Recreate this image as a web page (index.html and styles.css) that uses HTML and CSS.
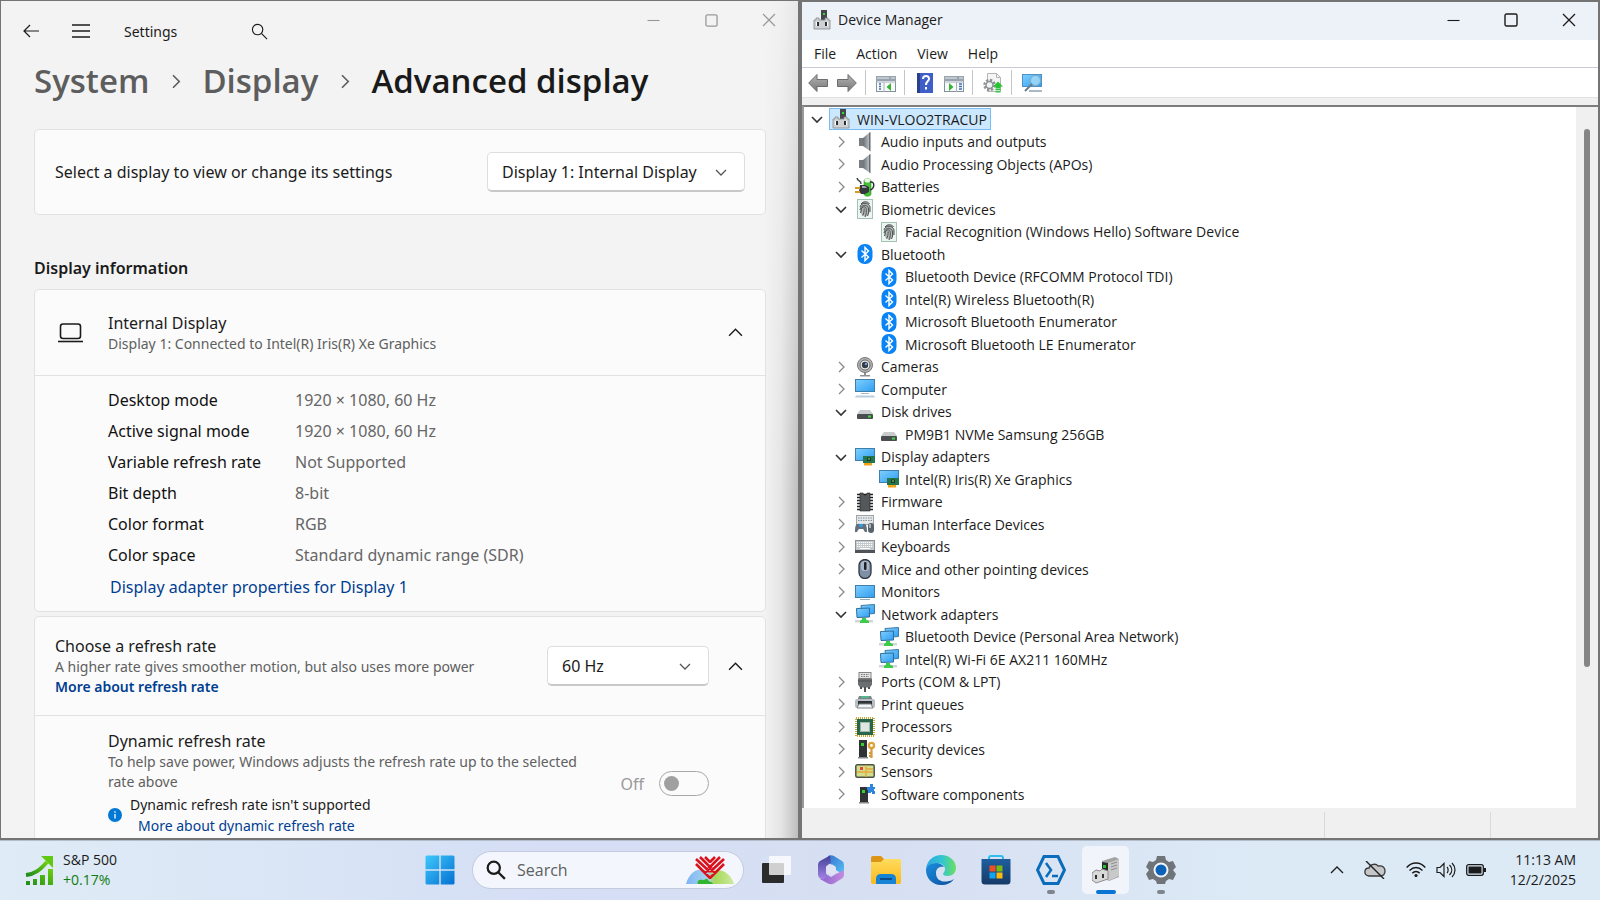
FILE: index.html
```html
<!DOCTYPE html>
<html lang="en">
<head>
    <meta charset="UTF-8">
    <meta name="viewport" content="width=device-width, initial-scale=1.0">
    <title>Advanced display</title>
    <link rel="stylesheet" href="styles.css">
</head>
<body>
    <!-- Icon sprite -->
    <svg class="sprite" aria-hidden="true">
        <defs>
            <linearGradient id="screen" x1="0" y1="0" x2="1" y2="1">
                <stop offset="0" stop-color="#7fd0ff"/><stop offset="1" stop-color="#2f9df0"/>
            </linearGradient>
            <linearGradient id="metal" x1="0" y1="0" x2="1" y2="0">
                <stop offset="0" stop-color="#6b7075"/><stop offset="1" stop-color="#c3c8cc"/>
            </linearGradient>
            <linearGradient id="arrow" x1="0" y1="0" x2="0" y2="1">
                <stop offset="0" stop-color="#b5b5b5"/><stop offset="1" stop-color="#777"/>
            </linearGradient>
            <linearGradient id="win" x1="0" y1="0" x2="1" y2="1">
                <stop offset="0" stop-color="#3fc8fb"/><stop offset="1" stop-color="#0470d2"/>
            </linearGradient>
            <linearGradient id="folder" x1="0" y1="0" x2="0" y2="1">
                <stop offset="0" stop-color="#ffdc5e"/><stop offset="1" stop-color="#fbb91c"/>
            </linearGradient>
            <linearGradient id="copA" x1="0" y1="0" x2="1" y2="1">
                <stop offset="0" stop-color="#3b6fd0"/><stop offset="1" stop-color="#54c6f5"/>
            </linearGradient>
            <linearGradient id="copB" x1="0" y1="0" x2="1" y2="0">
                <stop offset="0" stop-color="#8a62cc"/><stop offset="1" stop-color="#c48de0"/>
            </linearGradient>
            <linearGradient id="copC" x1="0" y1="0" x2="0" y2="1">
                <stop offset="0" stop-color="#3f4296"/><stop offset="1" stop-color="#a684e6"/>
            </linearGradient>
            <linearGradient id="edgeA" x1="0" y1="0" x2="1" y2="0">
                <stop offset="0" stop-color="#2ba6e4"/><stop offset="0.55" stop-color="#34c6cf"/><stop offset="1" stop-color="#6be05c"/>
            </linearGradient>
            <linearGradient id="edgeB" x1="0" y1="0" x2="1" y2="1">
                <stop offset="0" stop-color="#1a8fdd"/><stop offset="1" stop-color="#0d4f9e"/>
            </linearGradient>
            <linearGradient id="store" x1="0" y1="0" x2="0" y2="1">
                <stop offset="0" stop-color="#1e5f9f"/><stop offset="1" stop-color="#163a66"/>
            </linearGradient>
            <linearGradient id="chart" x1="0" y1="1" x2="1" y2="0">
                <stop offset="0" stop-color="#1f8a1c"/><stop offset="1" stop-color="#6fd00f"/>
            </linearGradient>
            <linearGradient id="hill" x1="0" y1="0" x2="1" y2="0">
                <stop offset="0" stop-color="#7db4f5"/><stop offset="0.45" stop-color="#a9d3ee"/><stop offset="0.6" stop-color="#a6d95a"/><stop offset="1" stop-color="#cdeaa0"/>
            </linearGradient>
        </defs>
        <symbol id="i-device" viewBox="0 0 20 20">
            <rect x="9" y="0" width="6" height="10" fill="#44484a"/><rect x="11" y="3" width="2" height="2" fill="#38d430"/>
            <path d="M2 10h2V8h3v2h6V8h3v2h2v9H2z" fill="#cfd2d4" stroke="#85898c" stroke-width=".8"/>
            <path d="M4 12h3v4H4zM13 12h3v4h-3z" fill="#fff"/><path d="M5 12h2v4H5zM13 12h2v4h-2z" fill="#2c2e30"/>
        </symbol>
        <symbol id="i-speaker" viewBox="0 0 20 20">
            <path d="M4 6h4v8H4z" fill="#777c80"/><path d="M8 6l7-6v19l-7-5z" fill="url(#metal)"/><path d="M14 1l1.500-1v19.500L14 18z" fill="#666b70"/>
        </symbol>
        <symbol id="i-battery" viewBox="0 0 20 20">
            <path d="M9 4c0-3 7-3 7 0v13c0 3-7 3-7 0z" fill="#43bf35" stroke="#328a2a" stroke-width=".6"/>
            <ellipse cx="12.500" cy="3.500" rx="3" ry="2" fill="#e9f7e6"/>
            <path d="M15 5c5-1 5 6 0 8" fill="none" stroke="#2d3034" stroke-width="1.500"/>
            <path d="M5 8h5l4 2v5l-4 2H6l-2-3z" fill="#34383c"/><path d="M7 9h3l2 2H7z" fill="#9da2a6"/>
            <path d="M0 11h5M0 15h5" stroke="#d99a25" stroke-width="1.800"/><path d="M2 1c1 4 4 2 4 6" fill="none" stroke="#44484c" stroke-width="1.500"/>
        </symbol>
        <symbol id="i-finger" viewBox="0 0 20 20">
            <rect x="2.500" y=".5" width="15" height="19" fill="#edf5f1" stroke="#a3c2b4"/>
            <ellipse cx="10" cy="10" rx="5" ry="7.500" fill="#b4b9b7"/>
            <g fill="none" stroke="#4b4f51" stroke-width="1"><path d="M6 5c2-3 7-3 8.500 0M5 8c1-5 9-5 10 0v5M5 11c1-6 8-6 8.500-1 .3 3 0 5-1 7M5.500 14c1.500-3 0-5 2.500-6 3-1 3.500 2 3.300 4 0 2-.3 4-1.300 6M7.500 16.500c1.500-2 1.500-4 1.700-7"/></g>
        </symbol>
        <symbol id="i-bluetooth" viewBox="0 0 20 20">
            <rect x="2.500" y="0" width="15" height="20" rx="7" fill="#0a84f5"/>
            <path d="M6.500 6.500l7 6.500-3.500 3.500v-13l3.500 3.500-7 6.500" fill="none" stroke="#fff" stroke-width="1.400"/>
        </symbol>
        <symbol id="i-camera" viewBox="0 0 20 20">
            <path d="M9 14h2v4h4v1.500H5V18h4z" fill="#8d9195"/><circle cx="10" cy="8" r="7.500" fill="#b3b3b3" stroke="#777"/>
            <circle cx="10" cy="8" r="5" fill="#f0f0f0" stroke="#666"/><circle cx="10" cy="8" r="3.200" fill="#333c49"/><circle cx="11" cy="7" r="1.200" fill="#7ba5d1"/>
        </symbol>
        <symbol id="i-computer" viewBox="0 0 20 20">
            <rect x=".5" y=".5" width="19" height="12" fill="url(#screen)" stroke="#3f7fa9"/>
            <path d="M6 14.500h8" stroke="#a9bac6"/><path d="M1 16.500h18l1 2H0z" fill="#b9cede"/>
        </symbol>
        <symbol id="i-disk" viewBox="0 0 20 20">
            <path d="M5 8h10l3 4H2z" fill="#c9cbcc"/><rect x="2" y="12" width="16" height="5" rx="1" fill="#4b4e50"/><rect x="13" y="13.500" width="3" height="2" fill="#3ddc3a"/>
        </symbol>
        <symbol id="i-display" viewBox="0 0 20 20">
            <rect x=".5" y="1.500" width="19" height="12" fill="url(#screen)" stroke="#3f7fa9"/>
            <path d="M9 16h8v2.500H9z" fill="#f3a31b"/><rect x="8" y="9" width="12" height="7" fill="#23764a"/><rect x="12" y="10.500" width="4" height="3.500" fill="#183e2a"/><path d="M13 11.500h2v1h-2z" fill="#9cd28a"/>
        </symbol>
        <symbol id="i-firmware" viewBox="0 0 20 20">
            <path d="M2 2.500h16M2 5.500h16M2 8.500h16M2 11.500h16M2 14.500h16M2 17.500h16" stroke="#222" stroke-width="1.600"/>
            <path d="M5 1h3l1 2h2l1-2h3v18H5z" fill="#55585a" stroke="#222" stroke-width=".6"/>
        </symbol>
        <symbol id="i-hid" viewBox="0 0 20 20">
            <rect x="1.500" y="1.500" width="17" height="9" fill="#e3e7e9" stroke="#9da5aa"/><path d="M3 4h14M3 6.500h14" stroke="#8b949a" stroke-dasharray="1.500 1"/>
            <path d="M0 18c0-6 1-9 4-8h4c3-1 4 2 4 8-3 1-3-3-4-3H4c-1 0-1 4-4 3z" fill="#626f7c"/><circle cx="6" cy="11.500" r="1.800" fill="#2ba2ef"/><rect x="13" y="9" width="6" height="10" rx="3" fill="#59636d"/><path d="M15 10v4" stroke="#fff"/>
        </symbol>
        <symbol id="i-keyboard" viewBox="0 0 20 20">
            <rect x=".5" y="3.500" width="19" height="11" fill="#c3c8cc" stroke="#8a9095"/>
            <path d="M2 5.500h16M2 7.500h16M2 9.500h16" stroke="#fff" stroke-dasharray="1.200 .8"/><path d="M5 11.500h10" stroke="#fff"/><path d="M0 13h20v3H0z" fill="#4d5358"/>
        </symbol>
        <symbol id="i-mouse" viewBox="0 0 20 20">
            <rect x="4" y=".5" width="12" height="19" rx="6" fill="#7e90a4" stroke="#30363d" stroke-width="1.300"/><rect x="6" y="2" width="8" height="10" rx="3" fill="#a9b8c8"/><rect x="9" y="3" width="2.500" height="8" rx="1" fill="#1e2226"/>
        </symbol>
        <symbol id="i-monitor" viewBox="0 0 20 20">
            <rect x=".5" y="3.500" width="19" height="12" fill="url(#screen)" stroke="#3f7fa9"/><path d="M5 17.500h10" stroke="#8faabd"/>
        </symbol>
        <symbol id="i-network" viewBox="0 0 20 20">
            <path d="M6 1.500l13.500-1v9L7 10.500z" fill="url(#screen)" stroke="#3a7baa"/><path d="M1.500 4.500l13-.5v9l-12.500.5z" fill="url(#screen)" stroke="#2f6e9c"/>
            <path d="M0 16h18v2.500H0z" fill="#d3d6d8"/><path d="M7 14h4v1.500l3 1.500v2H5v-2l2-1.500z" fill="#3ecb49"/>
        </symbol>
        <symbol id="i-port" viewBox="0 0 20 20">
            <rect x="4" y=".5" width="12" height="6" fill="#e4e4e4" stroke="#858585"/><path d="M6 2.500h8M6 4.500h8" stroke="#777" stroke-dasharray="1.500 1"/>
            <path d="M3 6.500h14v6l-2 3H5l-2-3z" fill="#6c6f71"/><path d="M3 9h14" stroke="#4a4d4f"/><path d="M6 15v2M10 15v5M14 15v2" stroke="#4d5052" stroke-width="2"/>
        </symbol>
        <symbol id="i-printer" viewBox="0 0 20 20">
            <path d="M4 2h12l2 5H2z" fill="#7c8388"/><path d="M6 3h8" stroke="#45c98f" stroke-width="1.500"/><rect x="0" y="5" width="20" height="9" rx="2" fill="#b7bec3"/>
            <path d="M3 7h14v5H3z" fill="#2e3336"/><path d="M4 10h12l2 4H2z" fill="#f3f5f6" stroke="#7d8589"/>
        </symbol>
        <symbol id="i-cpu" viewBox="0 0 20 20">
            <rect x="1" y="1" width="18" height="18" fill="none" stroke="#c9a83a" stroke-width="2" stroke-dasharray="1 1"/>
            <rect x="2" y="2" width="16" height="16" fill="#28664a"/><rect x="5.500" y="5.500" width="9" height="9" fill="#dfe5e2" stroke="#9fb8ab"/>
        </symbol>
        <symbol id="i-security" viewBox="0 0 20 20">
            <path d="M4 1h8v17H4z" fill="#303335"/><path d="M3 18h10v1.500H3z" fill="#85898b"/><rect x="6" y="4" width="3" height="3" fill="#2ed62c"/>
            <circle cx="16.500" cy="6.500" r="2.600" fill="none" stroke="#dda23a" stroke-width="2.400"/><path d="M16.500 9v10M14 14h2M14 17h2" stroke="#d39a35" stroke-width="2.200"/>
        </symbol>
        <symbol id="i-sensor" viewBox="0 0 20 20">
            <rect x=".8" y="2.800" width="18.400" height="12.400" rx="1.500" fill="#d1df8c" stroke="#4c5247" stroke-width="1.500"/>
            <path d="M2 10h16M11 3v12M11 7h7" stroke="#e7a93a" stroke-width="1.300"/><rect x="5" y="5" width="3" height="3" fill="#e2463a"/>
        </symbol>
        <symbol id="i-software" viewBox="0 0 20 20">
            <path d="M5 3h8v15H5z" fill="#303335"/><path d="M4 18h10v1.500H4z" fill="#85898b"/><rect x="7" y="6" width="3" height="3" fill="#2ed62c"/>
            <path d="M12 3h3V0h3v3h2v2h-1v2h1v3h-3V8h-1v1h-3V6h-1z" fill="#2c86dd"/>
        </symbol>
        <symbol id="i-down" viewBox="0 0 12 12"><path d="M1 4l5 5 5-5" fill="none" stroke="currentColor" stroke-width="var(--stroke, 1.300)"/></symbol>
        <symbol id="i-up" viewBox="0 0 14 14"><path d="M1 10l6-6 6 6" fill="none" stroke="currentColor" stroke-width="1.300"/></symbol>
        <symbol id="i-right" viewBox="0 0 12 12"><path d="M4 1l5 5-5 5" fill="none" stroke="currentColor" stroke-width="1.300"/></symbol>
        <symbol id="i-min" viewBox="0 0 14 14"><path d="M.5 7h13" stroke="currentColor" stroke-width="1.200"/></symbol>
        <symbol id="i-max" viewBox="0 0 14 14"><rect x="1" y="1" width="12" height="12" rx="1.500" fill="none" stroke="currentColor" stroke-width="1.400"/></symbol>
        <symbol id="i-close" viewBox="0 0 14 14"><path d="M1 1l12 12M13 1L1 13" stroke="currentColor" stroke-width="1.300"/></symbol>
        <symbol id="i-search" viewBox="0 0 18 18"><circle cx="7" cy="7" r="5.500" fill="none" stroke="currentColor" stroke-width="var(--stroke, 1.200)"/><path d="M11 11l6 6" stroke="currentColor" stroke-width="var(--stroke, 1.200)"/></symbol>
    </svg>

    <main class="desktop">
        <!-- Settings window -->
        <section class="window settings">
            <header class="settings-bar">
                <button class="icon-btn" aria-label="Back"><svg width="16" height="14" viewBox="0 0 16 14" fill="none" stroke="currentColor" stroke-width="1.200"><path d="M16 7H1M7 1L1 7l6 6"/></svg></button>
                <button class="icon-btn" aria-label="Menu"><svg width="18" height="14" viewBox="0 0 18 14" stroke="currentColor" stroke-width="1.300"><path d="M0 1h18M0 7h18M0 13h18"/></svg></button>
                <span class="app-name">Settings</span>
                <button class="icon-btn" aria-label="Find a setting"><svg width="17" height="17"><use href="#i-search"/></svg></button>
                <div class="controls inactive">
                    <button aria-label="Minimize"><svg width="13" height="13"><use href="#i-min"/></svg></button>
                    <button aria-label="Maximize"><svg width="13" height="13"><use href="#i-max"/></svg></button>
                    <button aria-label="Close"><svg width="14" height="14"><use href="#i-close"/></svg></button>
                </div>
            </header>

            <div class="settings-body">
                <h1 class="breadcrumb">
                    <a href="#">System</a>
                    <svg width="15" height="15"><use href="#i-right"/></svg>
                    <a href="#">Display</a>
                    <svg width="15" height="15"><use href="#i-right"/></svg>
                    <span>Advanced display</span>
                </h1>

                <div class="card picker">
                    <label for="displaySelect">Select a display to view or change its settings</label>
                    <div class="select display-select">
                        <select id="displaySelect"><option>Display 1: Internal Display</option></select>
                        <svg width="12" height="12"><use href="#i-down"/></svg>
                    </div>
                </div>

                <h2>Display information</h2>

                <div class="card">
                    <div class="card-head">
                        <svg class="laptop" width="25" height="20" viewBox="0 0 25 20" fill="none" stroke="currentColor" stroke-width="1.600"><rect x="2.500" y="1" width="20" height="14.500" rx="2.500"/><path d="M0 18.500h25"/></svg>
                        <div class="head-text">
                            <h3>Internal Display</h3>
                            <p class="note">Display 1: Connected to Intel(R) Iris(R) Xe Graphics</p>
                        </div>
                        <button class="expand" aria-label="Collapse"><svg width="15" height="15"><use href="#i-up"/></svg></button>
                    </div>
                    <div class="card-content">
                        <dl class="info">
                            <dt>Desktop mode</dt><dd>1920 × 1080, 60 Hz</dd>
                            <dt>Active signal mode</dt><dd>1920 × 1080, 60 Hz</dd>
                            <dt>Variable refresh rate</dt><dd>Not Supported</dd>
                            <dt>Bit depth</dt><dd>8-bit</dd>
                            <dt>Color format</dt><dd>RGB</dd>
                            <dt>Color space</dt><dd>Standard dynamic range (SDR)</dd>
                        </dl>
                        <a class="adapter-link" href="#">Display adapter properties for Display 1</a>
                    </div>
                </div>

                <div class="card rate-card">
                    <div class="card-head rate-head">
                        <div class="head-text">
                            <h3><label for="rateSelect">Choose a refresh rate</label></h3>
                            <p class="note">A higher rate gives smoother motion, but also uses more power</p>
                            <a class="strong-link" href="#">More about refresh rate</a>
                        </div>
                        <div class="select rate-select">
                            <select id="rateSelect"><option>60 Hz</option></select>
                            <svg width="12" height="12"><use href="#i-down"/></svg>
                        </div>
                        <button class="expand" aria-label="Collapse"><svg width="15" height="15"><use href="#i-up"/></svg></button>
                    </div>
                    <div class="dynamic">
                        <div class="dynamic-text">
                            <h3>Dynamic refresh rate</h3>
                            <p class="note">To help save power, Windows adjusts the refresh rate up to the selected rate above</p>
                            <div class="support">
                                <svg width="14" height="14" viewBox="0 0 14 14"><circle cx="7" cy="7" r="7" fill="#0078d4"/><path d="M7 6v4.500M7 3.300v1.500" stroke="#fff" stroke-width="1.300"/></svg>
                                <div>
                                    <p>Dynamic refresh rate isn't supported</p>
                                    <a href="#">More about dynamic refresh rate</a>
                                </div>
                            </div>
                        </div>
                        <label class="toggle">Off <input type="checkbox" role="switch" disabled></label>
                    </div>
                </div>
            </div>
        </section>

        <!-- Device Manager window -->
        <section class="window manager">
            <header class="manager-bar">
                <svg width="20" height="20"><use href="#i-device"/></svg>
                <span>Device Manager</span>
                <div class="controls">
                    <button aria-label="Minimize"><svg width="13" height="13"><use href="#i-min"/></svg></button>
                    <button aria-label="Maximize"><svg width="14" height="14"><use href="#i-max"/></svg></button>
                    <button aria-label="Close"><svg width="14" height="14"><use href="#i-close"/></svg></button>
                </div>
            </header>
            <nav class="menu">
                <button>File</button>
                <button>Action</button>
                <button>View</button>
                <button>Help</button>
            </nav>
            <div class="toolbar">
                <button aria-label="Back"><svg width="20" height="20" viewBox="0 0 20 20"><path d="M.7 10L9 1.500V6.500h10.500v7H9v5z" fill="url(#arrow)" stroke="#6d6d6d"/></svg></button>
                <button aria-label="Forward"><svg width="20" height="20" viewBox="0 0 20 20"><path d="M19.300 10L11 1.500V6.500H.5v7H11v5z" fill="url(#arrow)" stroke="#6d6d6d"/></svg></button>
                <i class="sep"></i>
                <button aria-label="Show console tree"><svg width="20" height="20" viewBox="0 0 20 20"><rect x=".5" y="3.500" width="19" height="15" fill="#f7f9fa" stroke="#87919a"/><path d="M0 3h20v5H0z" fill="#98a3ad"/><path d="M1 5h12M15 5h4" stroke="#e8edf1"/><path d="M8 9v10M0 9h20" stroke="#a9b1b8"/><path d="M3 11h2M3 13.500h2M3 16h2" stroke="#3f6fb5" stroke-width="1.400"/><path d="M15 10v8l-4.500-4z" fill="#35b435"/></svg></button>
                <i class="sep"></i>
                <button aria-label="Help"><svg width="20" height="20" viewBox="0 0 20 20"><rect x="2" y="0" width="16" height="20" fill="#3f5fc8"/><path d="M2 0h3v20H2z" fill="#2b3f8e"/><path d="M8 6c0-4 6-4 6-.3 0 2.800-3 2.500-3 6.300M11 14v2.500" stroke="#fff" stroke-width="2" fill="none"/></svg></button>
                <button aria-label="Properties"><svg width="20" height="20" viewBox="0 0 20 20"><rect x=".5" y="3.500" width="19" height="15" fill="#f7f9fa" stroke="#87919a"/><path d="M0 3h20v5H0z" fill="#98a3ad"/><path d="M1 5h12M15 5h4" stroke="#e8edf1"/><path d="M12.500 9v10M0 9h20" stroke="#a9b1b8"/><path d="M15 11h3M15 13.500h3M15 16h3" stroke="#3f6fb5" stroke-width="1.400"/><path d="M5 10v8l4.500-4z" fill="#35b435"/></svg></button>
                <i class="sep"></i>
                <button aria-label="Update driver"><svg width="20" height="20" viewBox="0 0 20 20"><path d="M4.500.5h9l4 4v14h-13z" fill="#f5f5f5" stroke="#b5b5b5"/><path d="M13.500.5v4h4" fill="none" stroke="#b5b5b5"/><circle cx="6.500" cy="12" r="5" fill="none" stroke="#8d9296" stroke-width="2.500" stroke-dasharray="2.300 1.600"/><circle cx="6.500" cy="12" r="3.500" fill="#f3f3f3" stroke="#8d9296" stroke-width="1.500"/><path d="M15 8.500l5 5h-2.500v2h-5v-2H10z" fill="#26c434"/><path d="M12.500 16.700h5M12.500 18.800h5" stroke="#26c434" stroke-width="1.200"/></svg></button>
                <i class="sep"></i>
                <button aria-label="Scan for hardware changes"><svg width="20" height="20" viewBox="0 0 20 20"><rect x=".5" y="1.500" width="19" height="12" fill="url(#screen)" stroke="#4d93c1"/><path d="M7 18h13" stroke="#8ea2b0" stroke-width="1.500"/><circle cx="13.500" cy="7.500" r="5" fill="#b2e2fa" fill-opacity=".7" stroke="#82a9bd"/><path d="M10 11l-7 7" stroke="#6b7d88" stroke-width="2"/></svg></button>
            </div>
            <div class="tree-pane">
                <ul class="tree" id="tree"></ul>
                <div class="scrollbar"><div class="thumb"></div></div>
            </div>
            <footer class="status"><span></span><span></span><span></span></footer>
        </section>
    </main>

    <!-- Taskbar -->
    <footer class="taskbar">
        <button class="stock">
            <svg width="29" height="30" viewBox="0 0 29 30"><path d="M1 20C10 19 15 15 22 7" fill="none" stroke="url(#chart)" stroke-width="4"/><path d="M16 1h12v12z" fill="#62c912"/><path d="M1 26h4v4H1zM8 24h4v6H8zM15 20h5v10h-5zM23 14h5v16h-5z" fill="url(#chart)"/></svg>
            <span>S&amp;P 500<br><span class="gain">+0.17%</span></span>
        </button>
        <div class="apps">
            <button aria-label="Start"><svg width="30" height="30" viewBox="0 0 30 30" fill="url(#win)"><path d="M2 .5h12.300v13.800H.5V2A1.500 1.500 0 012 .5zM15.700.5H28A1.500 1.500 0 0129.500 2v12.300H15.700zM.5 15.700h13.800v13.800H2A1.500 1.500 0 01.5 28zM15.700 15.700h13.800V28a1.500 1.500 0 01-1.500 1.500H15.700z"/></svg></button>
            <div class="search">
                <svg class="bold" width="20" height="20"><use href="#i-search"/></svg>
                <input type="text" placeholder="Search" aria-label="Search">
                <svg width="48" height="30" viewBox="0 0 48 30">
                    <path d="M0 29C5 13 17 12 24 18c8-6 20-2 24 11z" fill="url(#hill)"/><path d="M12 29c-2-4 3-5 5-4s3-3 5 0 4 1 5 4z" fill="#30b52e"/>
                    <path d="M24 23L10 9M24 23L38 9M24 17L10 4M24 17L38 4M24 12L14 2M24 12l10-10M24 7l-5-5M24 7l5-5M19 18l7-7M29 18l-7-7" fill="none" stroke="#d9121d" stroke-width="2.600"/>
                </svg>
            </div>
            <button aria-label="Task view"><svg width="30" height="30" viewBox="0 0 30 30"><rect x="1" y="8" width="22" height="20" rx="1" fill="#2b2b2b"/><rect x="8" y="1" width="22" height="19" rx="1" fill="#fff" fill-opacity=".78"/></svg></button>
            <button aria-label="Microsoft 365"><svg width="28" height="30" viewBox="0 0 28 30"><path d="M11 1q3-1.500 6 0l8 5q2 1 2 4v10l-8-5v-3l-8-4z" fill="url(#copA)"/><path d="M27 15v5q0 2-2 3.500l-8 5q-3 1.500-6 0L3 24l8-4 3 2 5-3z" fill="url(#copB)"/><path d="M13 .5l1 7-5 4v7l2 2-5 4q-5-1-5-5V10q0-3 2-4z" fill="url(#copC)"/><circle cx="14" cy="14.500" r="5" fill="#dfe3f4"/></svg></button>
            <button aria-label="File Explorer"><svg width="30" height="28" viewBox="0 0 30 28"><path d="M0 2Q0 0 2 0h8l3 3h5v5H0z" fill="#dd9515"/><path d="M0 6h10l3-3h15q2 0 2 2v21q0 2-2 2H2q-2 0-2-2z" fill="url(#folder)"/><path d="M5 28v-5q0-5 5-5h10q5 0 5 5v5z" fill="#1783d5"/><path d="M9 23h12" stroke="#0a4c8c" stroke-width="2"/></svg></button>
            <button aria-label="Edge"><svg width="30" height="30" viewBox="0 0 30 30"><path d="M0 14C1 5 8 0 15 0c9 0 15 6 15 13 0 5-4 8-8 8-3 0-5-1-5-2s2-2 2-5-3-6-8-6C6 8 1 10 0 14z" fill="url(#edgeA)"/><path d="M0 15c0-4 4-7 10-7 4 0 7 2 8 4-5-1-8 2-8 6 0 7 6 10 13 8 2 0 3-1 5-2-3 4-7 6-13 6C6 30 0 23 0 15z" fill="url(#edgeB)"/></svg></button>
            <button aria-label="Store"><svg width="30" height="30" viewBox="0 0 30 30"><path d="M8 5V3q0-2 2-2h10q2 0 2 2v2" fill="none" stroke="#30bdf0" stroke-width="2"/><path d="M.5 4h29v22q0 3.500-3.500 3.500H4Q.5 29.500.5 26z" fill="url(#store)"/><path d="M8.500 10.500h6v6h-6z" fill="#f04f25"/><path d="M15.500 10.500h6v6h-6z" fill="#7dba10"/><path d="M8.500 17.500h6v6h-6z" fill="#12a5ef"/><path d="M15.500 17.500h6v6h-6z" fill="#fdb90c"/></svg></button>
            <button class="running" aria-label="PowerShell"><svg width="30" height="30" viewBox="0 0 30 30" fill="none" stroke="#0b6cbb"><path d="M8 1.500h14L28.500 15 22 28.500H8L1.500 15z" stroke-width="3"/><path d="M10 8l5 7-5 7M16 21h6" stroke-width="2.500"/></svg></button>
            <button class="running active" aria-label="Device Manager"><svg width="28" height="28" viewBox="0 0 28 28"><path d="M10 5l13-4 4 2v18l-10 4-7-3z" fill="#a3a3a3"/><path d="M16 7l11-4v17l-11 5z" fill="#c9c9c9"/><path d="M19 8l6-2M19 11l6-2M19 14l6-2" stroke="#8d8d8d"/><path d="M10 6l6 1v10l-6-2z" fill="#282b29"/><rect x="11" y="9" width="3" height="3" fill="#23c32b"/><path d="M0 17l4-3 4 1 2-2 6 2v8L4 27l-4-3z" fill="#d9d9d9" stroke="#8d8d8d"/><path d="M3 19h2v4H3zM10 18h2v4h-2z" fill="#333"/></svg></button>
            <button class="running" aria-label="Settings"><svg width="30" height="30" viewBox="0 0 30 30"><path d="M11 1h8l1 4 3 2 4-1 3 6-3 3 3 4-3 6-4-1-3 2-1 3h-8l-1-3-3-2-4 1-3-6 3-4-3-3 3-6 4 1 3-2z" fill="#6f7479"/><circle cx="15" cy="15" r="7.500" fill="#f2f5f8"/><circle cx="15" cy="15" r="5.500" fill="#0b62b6"/></svg></button>
        </div>
        <div class="tray">
            <button aria-label="Show hidden icons"><svg width="14" height="14"><use href="#i-up"/></svg></button>
            <button aria-label="OneDrive"><svg width="22" height="18" viewBox="0 0 22 18"><path d="M5 15c-6-1-5-8 0-8 1-4 7-5 9-2 5-1 7 2 7 5 0 4-3 5-5 5z" fill="#c4c6c8" stroke="#3a3a3a" stroke-width="1.300"/><path d="M2 0l18 18" stroke="#222" stroke-width="1.400"/></svg></button>
            <button class="quick" aria-label="Network, volume and battery">
                <svg width="20" height="16" viewBox="0 0 20 16" fill="none" stroke="#1b1b1b" stroke-width="1.400"><path d="M.7 5.500c5-6 13.600-6 18.600 0M3.500 8.500c4-4 9-4 13 0M6.300 11.300c2-2.400 5.400-2.400 7.400 0"/><circle cx="10" cy="13.500" r="1.600" fill="#1b1b1b" stroke="none"/></svg>
                <svg width="20" height="16" viewBox="0 0 20 16" fill="none" stroke="#1b1b1b" stroke-width="1.200"><path d="M1 5.500h3l4-4v13l-4-4H1zM11 5c1.500 1.500 1.500 4.500 0 6M13.500 3c3 3 3 7 0 10M16 1c4 4 4 10 0 14"/></svg>
                <svg width="20" height="12" viewBox="0 0 20 12"><rect x=".7" y=".7" width="16.600" height="10.600" rx="2" fill="none" stroke="#1b1b1b" stroke-width="1.300"/><rect x="2.500" y="2.500" width="13" height="7" fill="#1b1b1b"/><path d="M18 4h2v4h-2z" fill="#1b1b1b"/></svg>
            </button>
            <button class="clock">11:13 AM<br>12/2/2025</button>
        </div>
    </footer>

    <script>
        // level, state (o = open, c = closed, - = no children), icon, name
        const devices = [
            [0, "o", "device", "WIN-VLOO2TRACUP"],
            [1, "c", "speaker", "Audio inputs and outputs"],
            [1, "c", "speaker", "Audio Processing Objects (APOs)"],
            [1, "c", "battery", "Batteries"],
            [1, "o", "finger", "Biometric devices"],
            [2, "-", "finger", "Facial Recognition (Windows Hello) Software Device"],
            [1, "o", "bluetooth", "Bluetooth"],
            [2, "-", "bluetooth", "Bluetooth Device (RFCOMM Protocol TDI)"],
            [2, "-", "bluetooth", "Intel(R) Wireless Bluetooth(R)"],
            [2, "-", "bluetooth", "Microsoft Bluetooth Enumerator"],
            [2, "-", "bluetooth", "Microsoft Bluetooth LE Enumerator"],
            [1, "c", "camera", "Cameras"],
            [1, "c", "computer", "Computer"],
            [1, "o", "disk", "Disk drives"],
            [2, "-", "disk", "PM9B1 NVMe Samsung 256GB"],
            [1, "o", "display", "Display adapters"],
            [2, "-", "display", "Intel(R) Iris(R) Xe Graphics"],
            [1, "c", "firmware", "Firmware"],
            [1, "c", "hid", "Human Interface Devices"],
            [1, "c", "keyboard", "Keyboards"],
            [1, "c", "mouse", "Mice and other pointing devices"],
            [1, "c", "monitor", "Monitors"],
            [1, "o", "network", "Network adapters"],
            [2, "-", "network", "Bluetooth Device (Personal Area Network)"],
            [2, "-", "network", "Intel(R) Wi-Fi 6E AX211 160MHz"],
            [1, "c", "port", "Ports (COM & LPT)"],
            [1, "c", "printer", "Print queues"],
            [1, "c", "cpu", "Processors"],
            [1, "c", "security", "Security devices"],
            [1, "c", "sensor", "Sensors"],
            [1, "c", "software", "Software components"]
        ];

        const tree = document.getElementById("tree");

        devices.forEach(([level, state, icon, name]) => {
            const row = document.createElement("li");
            row.className = `row level-${level}`;
            if (state !== "-") {
                const open = state === "o";
                row.innerHTML = `<button class="twisty ${open ? "open" : ""}" aria-label="${open ? "Collapse" : "Expand"}"><svg width="12" height="12"><use href="#i-${open ? "down" : "right"}"/></svg></button>`;
            }
            row.innerHTML += `<span class="node"><svg width="20" height="20"><use href="#i-${icon}"/></svg><span class="name"></span></span>`;
            row.querySelector(".name").textContent = name;
            tree.appendChild(row);
        });
    </script>
</body>
</html>
```

FILE: styles.css
```css
/* General Styles */
* {
    box-sizing: border-box;
}

body {
    font-family: 'Open Sans', 'Noto Sans', sans-serif;
    font-size: 16px;
    margin: 0;
    height: 100vh;
    display: flex;
    flex-direction: column;
    overflow: hidden;
    color: #1b1b1b;
}

h1, h2, h3, p, dl, dd, ul {
    margin: 0;
    padding: 0;
    font-weight: 400;
}

button, select, input {
    font: inherit;
    color: inherit;
}

button {
    background: none;
    border: 0;
    padding: 0;
    display: flex;
    align-items: center;
    justify-content: center;
}

svg {
    display: block;
    flex: none;
}

a {
    color: #003e92;
    text-decoration: none;
}

.sprite {
    position: absolute;
    width: 0;
    height: 0;
}

.desktop {
    flex: 1;
    min-height: 0;
    display: grid;
    grid-template-columns: 1fr 1fr;
}

.window {
    min-width: 0;
    min-height: 0;
    overflow: hidden;
    display: flex;
    flex-direction: column;
    border: 2px solid #747474;
}

.controls {
    display: flex;
    align-self: flex-start;
    margin-left: auto;
}

.controls button {
    width: 58px;
    height: 36px;
}

.controls.inactive {
    color: #999;
}

/* Settings window */
.settings {
    font-family: 'Noto Sans', 'Open Sans', sans-serif;
    border-width: 1px 2px 2px 1px;
    background:
        linear-gradient(to bottom, rgba(243, 243, 243, 0.8), rgba(243, 243, 243, 0) 500px),
        linear-gradient(to right, rgba(0, 0, 0, 0), rgba(0, 0, 0, 0.06) 50%, rgba(0, 0, 0, 0.22)) right / 34px 100% no-repeat,
        #f3f3f3;
}

.settings-bar {
    display: flex;
    align-items: center;
    height: 60px;
    padding-left: 5px;
    flex: none;
}

.settings-bar .controls button {
    height: 38px;
}

.icon-btn {
    width: 50px;
    height: 40px;
}

.app-name {
    width: 128px;
    padding-left: 18px;
    font-size: 14px;
}

.settings-body {
    padding: 0 32px 0 33px;
    display: flex;
    flex-direction: column;
}

.breadcrumb {
    display: flex;
    align-items: center;
    gap: 19px;
    height: 40px;
    margin-bottom: 28px;
    font-family: 'Open Sans', 'Noto Sans', sans-serif;
    font-size: 33px;
    font-weight: 600;
    line-height: 40px;
    color: #1a1a1a;
    white-space: nowrap;
}

.breadcrumb a, .breadcrumb svg {
    color: #5d5d5d;
}

.card {
    background: #fbfbfb;
    border: 1px solid #e2e2e2;
    border-radius: 5px;
}

.picker {
    display: flex;
    align-items: center;
    justify-content: space-between;
    height: 86px;
    padding: 0 20px;
}

.select {
    position: relative;
}

.select select {
    appearance: none;
    width: 100%;
    height: 40px;
    padding: 0 14px;
    background: #fff;
    border: 1px solid #dedede;
    border-bottom: 2px solid #c8c8c8;
    border-radius: 5px;
}

.select svg {
    position: absolute;
    right: 18px;
    top: 14px;
    color: #555;
    pointer-events: none;
}

.display-select {
    width: 258px;
}

.rate-select {
    width: 162px;
}

h2 {
    font-size: 16px;
    font-weight: 600;
    line-height: 24px;
    margin: 41px 0 9px;
}

h3 {
    font-size: 16px;
    line-height: 22px;
}

.note {
    font-size: 14px;
    line-height: 20px;
    color: #606060;
}

.card-head {
    display: flex;
    align-items: center;
    height: 86px;
    padding: 0 8px 0 23px;
    border-bottom: 1px solid #e2e2e2;
}

.laptop {
    margin-right: 25px;
}

.head-text {
    flex: 1;
}

.expand {
    width: 44px;
    height: 40px;
}

.card-content {
    padding: 9px 73px 8px;
}

.info {
    display: grid;
    grid-template-columns: 187px 1fr;
    line-height: 31px;
    color: #111;
}

.info dd {
    color: #666;
}

.adapter-link {
    display: block;
    padding-left: 2px;
    line-height: 32px;
}

.rate-card {
    margin-top: 4px;
}

.rate-head {
    height: 99px;
    padding-left: 20px;
}

.strong-link {
    display: block;
    font-size: 14px;
    font-weight: 600;
    line-height: 20px;
}

.rate-select {
    margin-right: 4px;
}

.dynamic {
    display: flex;
    align-items: flex-start;
    justify-content: space-between;
    padding: 14px 56px 30px 73px;
}

.dynamic-text {
    width: 490px;
}

.support {
    display: flex;
    align-items: center;
    gap: 8px;
    margin-top: 2px;
    font-size: 14px;
    line-height: 21px;
}

.support a {
    padding-left: 8px;
}

.toggle {
    display: flex;
    align-items: center;
    gap: 15px;
    margin-top: 41px;
    color: #999;
}

.toggle input {
    appearance: none;
    width: 50px;
    height: 25px;
    margin: 0;
    padding: 4px;
    border: 1px solid #a8a8a8;
    border-radius: 13px;
}

.toggle input::before {
    content: "";
    display: block;
    width: 15px;
    height: 15px;
    border-radius: 50%;
    background: #a0a0a0;
}

/* Device Manager window */
.manager {
    background: #f0f0f0;
    font-size: 14px;
}

.manager-bar {
    display: flex;
    align-items: center;
    gap: 6px;
    height: 38px;
    padding: 0 0 3px 10px;
    background: #edf2f9;
    flex: none;
}

.menu {
    display: flex;
    gap: 20px;
    height: 28px;
    padding-left: 12px;
    background: #fff;
    border-bottom: 1px solid #c9ccd2;
    flex: none;
}

.toolbar {
    display: flex;
    align-items: center;
    height: 30px;
    padding-left: 1px;
    background: #fff;
    border-bottom: 1px solid #e2e2e2;
    flex: none;
}

.toolbar button {
    width: 29px;
}

.sep {
    width: 1px;
    height: 25px;
    margin: 0 5px 0 4px;
    background: #c5c5c5;
}

.tree-pane {
    flex: 1;
    min-height: 0;
    display: flex;
    margin-top: 7px;
    background: #fff;
    border-top: 2px solid #7d7d7d;
    border-left: 2px solid #9a9a9a;
}

.tree {
    flex: 1;
    overflow: hidden;
    list-style: none;
    padding: 1px 0 0 1px;
}

.row {
    display: flex;
    height: 22px;
}

.row:nth-child(even) {
    height: 23px;
}

.level-1 {
    padding-left: 24px;
}

.level-2 {
    padding-left: 72px;
}

.twisty {
    width: 24px;
    color: #8a8a8a;
}

.twisty.open {
    --stroke: 1.6;
    color: #333;
}

.node {
    display: flex;
    align-items: center;
    gap: 6px;
    padding: 0 4px 0 2px;
}

.level-0 .node {
    background: #cce8ff;
    outline: 1px solid #7abcf0;
    outline-offset: -1px;
}

.scrollbar {
    width: 22px;
    padding: 22px 8px 0;
    background: #f0f0f0;
}

.thumb {
    height: 538px;
    border-radius: 3px;
    background: #858585;
}

.status {
    display: grid;
    grid-template-columns: 1fr 166px 108px;
    height: 30px;
    padding-top: 4px;
    flex: none;
}

.status span + span {
    border-left: 1px solid #d9d9d9;
}

/* Taskbar */
.taskbar {
    display: grid;
    grid-template-columns: 1fr auto 1fr;
    height: 60px;
    padding-bottom: 1px;
    flex: none;
    font-size: 14px;
    line-height: 20px;
    border-top: 1px solid #b4bdcb;
    background: linear-gradient(to right, #dfecf6, #d5def5 35%, #d7dff2 55%, #dceaf6 80%);
}

.stock {
    justify-self: start;
    gap: 9px;
    padding-left: 25px;
    text-align: left;
}

.gain {
    color: #107c10;
}

.apps {
    display: flex;
    align-items: center;
}

.apps button {
    position: relative;
    width: 55px;
    height: 48px;
}

.search {
    display: flex;
    align-items: center;
    width: 272px;
    height: 38px;
    margin: 0 4px 0 5px;
    padding: 0 9px 0 13px;
    background: #f3f7fd;
    border: 1px solid #c3cbdd;
    border-radius: 19px;
}

.search input {
    flex: 1;
    min-width: 0;
    padding: 0 0 0 11px;
    border: 0;
    background: none;
    font-size: 16px;
}

.search input::placeholder {
    color: #606060;
}

.bold {
    --stroke: 2;
}

.apps .active {
    width: 47px;
    margin: 0 4px;
    border-radius: 5px;
    background: #f1f5fb;
}

.running::after {
    content: "";
    position: absolute;
    left: 50%;
    bottom: 0;
    width: 8px;
    height: 4px;
    margin-left: -4px;
    border-radius: 2px;
    background: #7f858e;
}

.active::after {
    width: 20px;
    margin-left: -10px;
    background: #0a74d4;
}

.tray {
    display: flex;
    justify-content: flex-end;
    align-items: center;
    gap: 20px;
    padding-right: 24px;
}

.quick {
    gap: 10px;
}

.clock {
    padding-left: 4px;
    text-align: right;
}
```
